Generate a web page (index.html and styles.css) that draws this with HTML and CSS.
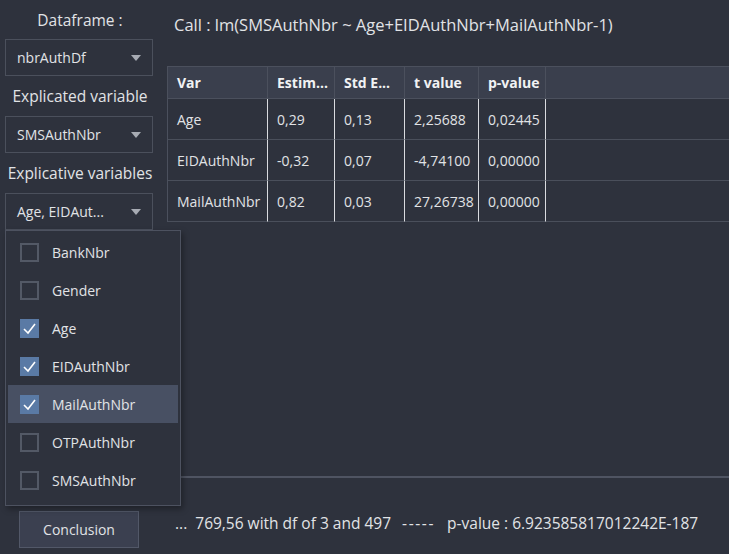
FILE: index.html
```html
<!DOCTYPE html>
<html lang="en">
<head>
<meta charset="utf-8">
<title>Linear model</title>
<link rel="stylesheet" href="styles.css">
</head>
<body>
<div class="app">
  <aside class="side">
    <div class="label first">Dataframe :</div>
    <div class="combo"><span>nbrAuthDf</span><i class="arrow"></i></div>
    <div class="label">Explicated variable</div>
    <div class="combo"><span>SMSAuthNbr</span><i class="arrow"></i></div>
    <div class="label">Explicative variables</div>
    <div class="combo"><span>Age, EIDAut...</span><i class="arrow"></i></div>
  </aside>

  <main class="main">
    <div class="call">Call : lm(SMSAuthNbr ~ Age+EIDAuthNbr+MailAuthNbr-1)</div>
    <div class="table-wrap">
      <table class="grid">
        <colgroup>
          <col class="c1"><col class="c2"><col class="c3"><col class="c4"><col class="c5"><col class="c6">
        </colgroup>
        <thead>
          <tr class="head">
            <th>Var</th><th>Estim...</th><th>Std E...</th><th>t value</th><th>p-value</th><th class="fill"></th>
          </tr>
        </thead>
        <tbody>
          <tr class="row"><td>Age</td><td>0,29</td><td>0,13</td><td>2,25688</td><td>0,02445</td><td class="fill"></td></tr>
          <tr class="row"><td>EIDAuthNbr</td><td>-0,32</td><td>0,07</td><td>-4,74100</td><td>0,00000</td><td class="fill"></td></tr>
          <tr class="row"><td>MailAuthNbr</td><td>0,82</td><td>0,03</td><td>27,26738</td><td>0,00000</td><td class="fill"></td></tr>
        </tbody>
      </table>
    </div>
  </main>

  <div class="foot-left">
    <button class="btn">Conclusion</button>
  </div>
  <div class="foot-right">...  769,56 with df of 3 and 497  <span class="sep">-----</span>  p-value : 6.923585817012242E-187</div>

  <ul class="popup">
    <li class="item"><span class="box"></span>BankNbr</li>
    <li class="item"><span class="box"></span>Gender</li>
    <li class="item"><span class="box on"><svg viewBox="0 0 19 19" width="19" height="19"><polyline points="4,10 8,14 15,5" fill="none" stroke="#fff" stroke-width="1.6"/></svg></span>Age</li>
    <li class="item"><span class="box on"><svg viewBox="0 0 19 19" width="19" height="19"><polyline points="4,10 8,14 15,5" fill="none" stroke="#fff" stroke-width="1.6"/></svg></span>EIDAuthNbr</li>
    <li class="item hot"><span class="box on"><svg viewBox="0 0 19 19" width="19" height="19"><polyline points="4,10 8,14 15,5" fill="none" stroke="#fff" stroke-width="1.6"/></svg></span>MailAuthNbr</li>
    <li class="item"><span class="box"></span>OTPAuthNbr</li>
    <li class="item"><span class="box"></span>SMSAuthNbr</li>
  </ul>
</div>
</body>
</html>
```
FILE: styles.css
```css
* { box-sizing: border-box; }
html, body { margin: 0; padding: 0; }
body {
  width: 729px;
  height: 554px;
  overflow: hidden;
  background: #2e323d;
  color: #e1e3e6;
  font-family: "Open Sans", "Noto Sans", sans-serif;
}
.app {
  position: relative;
  display: grid;
  grid-template-columns: 160px 1fr;
  grid-template-rows: 476px 78px;
  height: 554px;
}
.side {
  display: flex;
  flex-direction: column;
}
.label {
  height: 40px;
  display: flex;
  align-items: center;
  justify-content: center;
  font-size: 15.5px;
  white-space: nowrap;
}
.label.first { height: 39px; }
.combo {
  height: 37px;
  margin: 0 7px 0 5px;
  border: 1px solid #4b505c;
  display: flex;
  align-items: center;
  justify-content: space-between;
  padding: 0 11px 0 11px;
  font-size: 14px;
}
.arrow {
  width: 0;
  height: 0;
  border-left: 5px solid transparent;
  border-right: 5px solid transparent;
  border-top: 6px solid #a7abb3;
}
.main {
  padding-left: 7px;
  overflow: hidden;
}
.call {
  margin-top: 13px;
  padding-left: 7px;
  height: 24px;
  line-height: 24px;
  font-size: 16.5px;
  white-space: nowrap;
}
.table-wrap {
  margin-top: 29px;
  overflow: hidden;
}
.grid {
  width: 640px;
  table-layout: fixed;
  border-collapse: separate;
  border-spacing: 0;
  border-top: 1px solid #4b505d;
  border-left: 1px solid #4b505d;
  font-size: 14px;
}
.c1 { width: 100px; }
.c2 { width: 67px; }
.c3 { width: 70px; }
.c4 { width: 74px; }
.c5 { width: 67px; }
.head { height: 32px; background: #3a3f4d; }
.grid th {
  text-align: left;
  font-weight: 700;
  color: #f1f2f4;
  padding: 0 9px;
  border-right: 1px solid #4b505d;
  border-bottom: 1px solid #4b505d;
  white-space: nowrap;
  overflow: hidden;
}
.row { height: 41px; }
.grid td {
  padding: 0 9px;
  border-right: 1px solid #d9dbdf;
  border-bottom: 1px solid #4a4f5b;
  white-space: nowrap;
  overflow: hidden;
}
.grid .fill { border-right: none; }
.foot-left {
  padding: 35px 0 0 19px;
}
.btn {
  width: 120px;
  height: 37px;
  background: #3b4050;
  border: 1px solid #525868;
  color: #e1e3e6;
  font-family: inherit;
  font-size: 14px;
  padding: 0;
}
.foot-right {
  border-top: 2px solid #4f5462;
  padding: 35px 0 0 15px;
  line-height: 20px;
  font-size: 15.5px;
  white-space: pre;
}
.sep {
  margin: 0 4px 0 3px;
  letter-spacing: 1.6px;
}
.popup {
  position: absolute;
  left: 5px;
  top: 230px;
  width: 176px;
  height: 276px;
  margin: 0;
  padding: 2px 2px;
  list-style: none;
  background: #2e323d;
  border: 1px solid #4d5260;
  box-shadow: 2px 3px 6px rgba(0, 0, 0, 0.35);
}
.item {
  height: 38px;
  display: flex;
  align-items: center;
  padding-left: 12px;
  font-size: 14px;
}
.item.hot { background: #485063; }
.box {
  width: 19px;
  height: 19px;
  margin-right: 13px;
  border: 2px solid #535966;
  flex: none;
}
.box.on {
  background: #5a7aa5;
  border: none;
}
.box svg { display: block; }
```
